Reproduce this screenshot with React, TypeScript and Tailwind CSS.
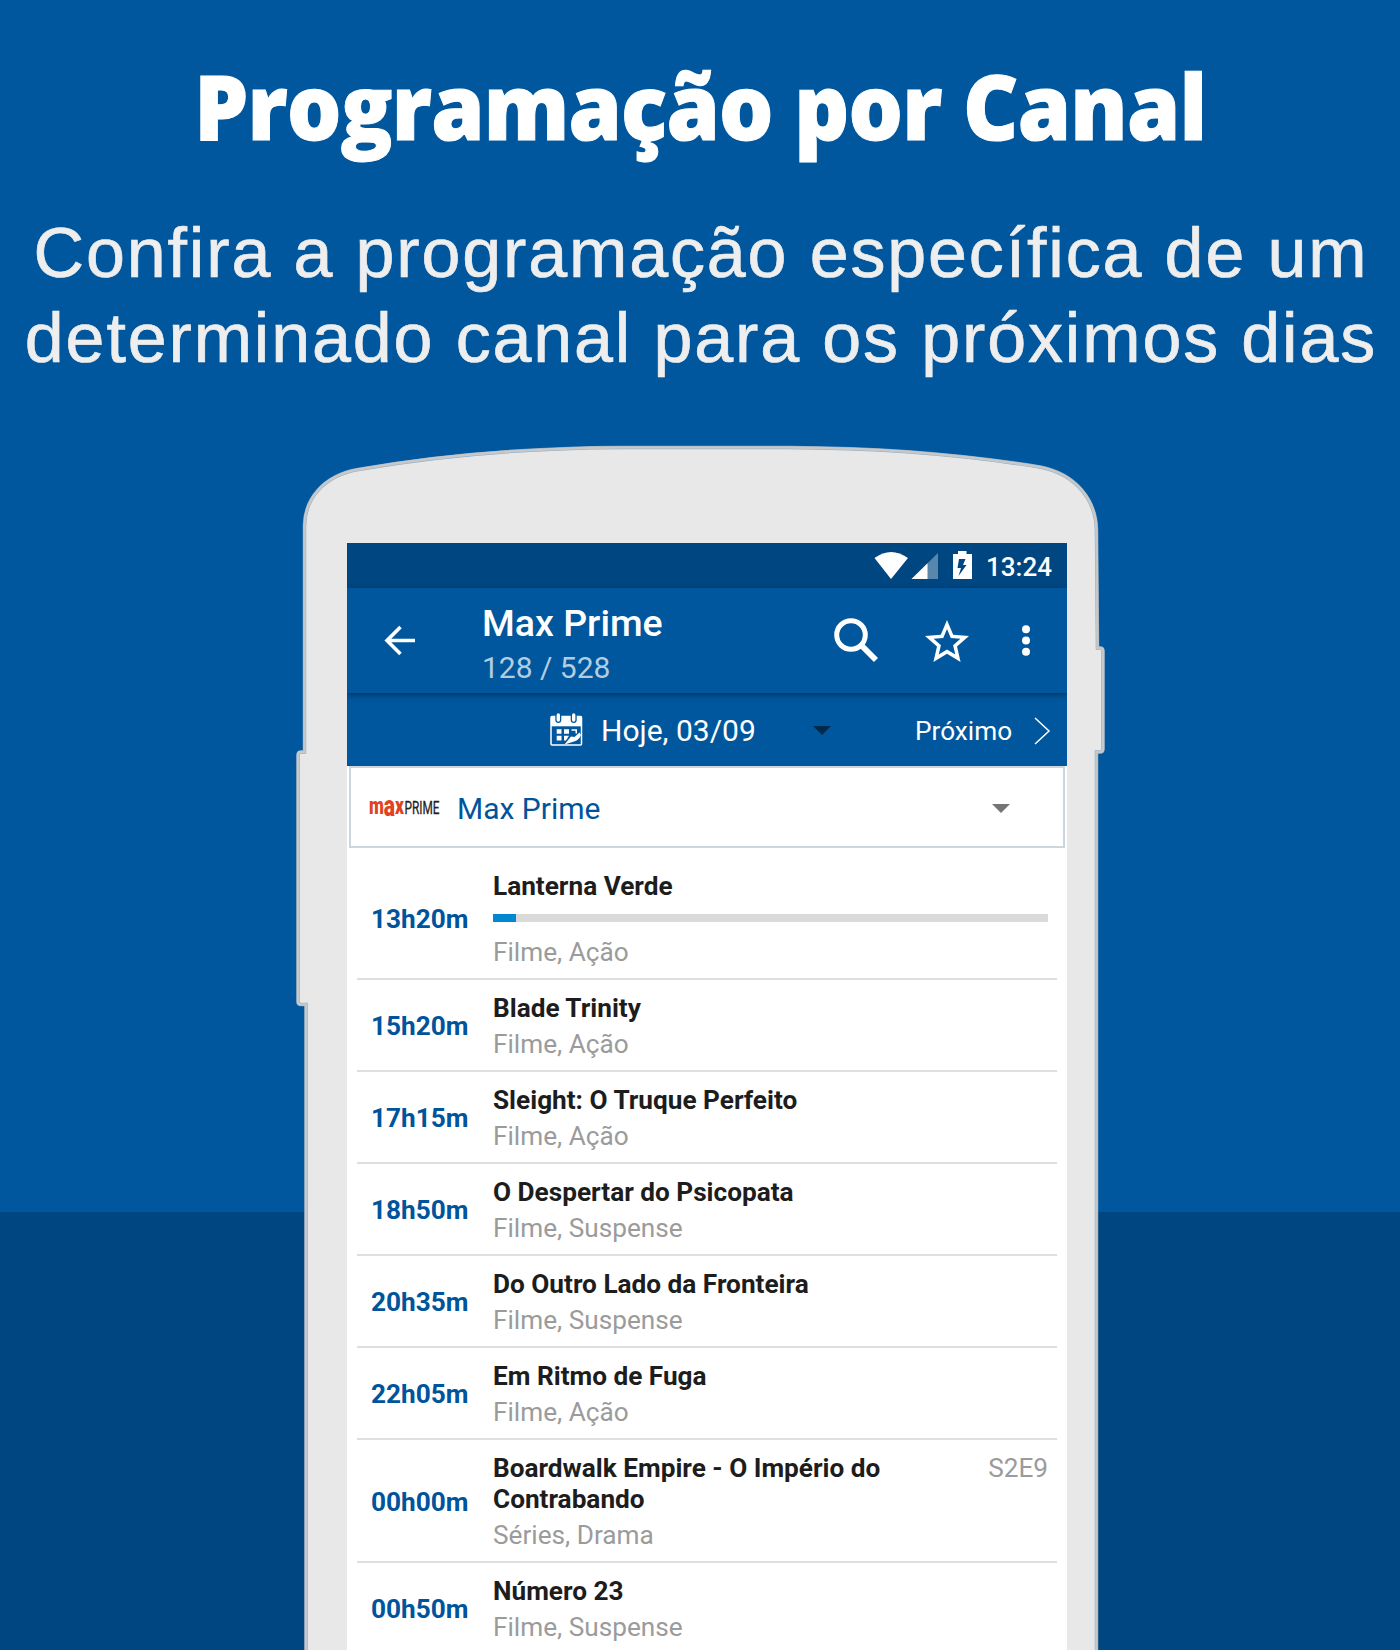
import React from 'react';

interface Programme {
    time: string;
    title: string;
    genre: string;
    episode?: string;
    progress?: number;
}

const programmes: Programme[] = [
    { time: '13h20m', title: 'Lanterna Verde', genre: 'Filme, Ação', progress: 4.1 },
    { time: '15h20m', title: 'Blade Trinity', genre: 'Filme, Ação' },
    { time: '17h15m', title: 'Sleight: O Truque Perfeito', genre: 'Filme, Ação' },
    { time: '18h50m', title: 'O Despertar do Psicopata', genre: 'Filme, Suspense' },
    { time: '20h35m', title: 'Do Outro Lado da Fronteira', genre: 'Filme, Suspense' },
    { time: '22h05m', title: 'Em Ritmo de Fuga', genre: 'Filme, Ação' },
    { time: '00h00m', title: 'Boardwalk Empire - O Império do Contrabando', genre: 'Séries, Drama', episode: 'S2E9' },
    { time: '00h50m', title: 'Número 23', genre: 'Filme, Suspense' },
];

const bodyOutline =
    'M306 1660V1004.500H301Q298 1004.500 298 1001.500V755Q298 752 301 752H304.500V525C305 500 322 476 358 469.500C440 455 530 448 620 447.500H790C880 448 960 454 1040 467C1076 474 1096 500 1096.500 530L1097.500 648H1100Q1103 648 1103 651V749Q1103 752 1100 752H1096.500V1660Z';

// outline of the device, drawn behind the screen
const PhoneBody: React.FC = () => (
    <svg className="absolute left-0 top-0" width="810" height="1205" viewBox="295 445 810 1205">
        <path d={bodyOutline} fill="#e8e8e8" stroke="#8fabc2" strokeWidth="3.500" />
        <path d={bodyOutline} fill="none" stroke="#c6c8c9" strokeWidth="2.600" />
    </svg>
);

const StatusBar: React.FC = () => (
    <div className="flex h-[45px] items-center justify-end bg-[#004680] pr-[15px] pt-px text-white">
        <svg width="100" height="30" viewBox="0 0 100 30" fill="#fff">
            <path d="M0.500 7Q17 -5 34 7L17 28Z" />
            <path d="M37.500 28H64V2Z" opacity=".35" />
            <path d="M37.500 28H53.500V12.300Z" />
            <path
                fillRule="evenodd"
                d="M79 3H84V0H92.500V3H98V28H79ZM85 8L83.500 17H87L84.500 25L92.500 14H89L91.500 8Z"
            />
        </svg>
        <span className="ml-[12px] mt-[2px] text-[26px] font-medium leading-none">13:24</span>
    </div>
);

const Toolbar: React.FC = () => (
    <div className="relative flex h-[105px] bg-[#00579d] text-white shadow-[0_2px_6px_rgba(0,0,0,0.4)]">
        <svg className="ml-[37px] mt-[37px]" width="32" height="32" viewBox="0 0 32 32" fill="none" stroke="#fff" strokeWidth="3.600">
            <path d="M31 15.500H4M16.500 2L3 15.500L16.500 29" />
        </svg>
        <div className="ml-[66px] mt-[12px] flex-1">
            <h2 className="text-[37.5px] font-medium leading-[46px]">Max Prime</h2>
            <p className="mt-px text-[30px] leading-[42px] text-[#b2cde1]">128 / 528</p>
        </div>
        <svg className="mt-[30px]" width="44" height="46" viewBox="0 0 44 46" fill="none" stroke="#fff">
            <circle cx="17" cy="17" r="14.300" strokeWidth="5" />
            <path d="M27.500 27.500L42 42" strokeWidth="5.800" />
        </svg>
        <svg className="ml-[47px] mt-[32px]" width="44" height="42" viewBox="2 2 20 19" fill="#fff">
            <path d="M22 9.240l-7.190-.62L12 2 9.190 8.630 2 9.240l5.460 4.730L5.820 21 12 17.270 18.180 21l-1.630-7.030L22 9.240zM12 15.400l-3.760 2.270 1-4.280-3.320-2.880 4.380-.38L12 6.100l1.710 4.040 4.380.38-3.320 2.880 1 4.280L12 15.400z" />
        </svg>
        <svg className="ml-[52px] mr-[36px] mt-[36px]" width="10" height="34" viewBox="0 0 10 34" fill="#fff">
            <circle cx="5" cy="5.300" r="4" />
            <circle cx="5" cy="16.500" r="4" />
            <circle cx="5" cy="27.700" r="4" />
        </svg>
    </div>
);

const DateBar: React.FC = () => (
    <div className="flex h-[73px] items-center bg-[#00579d] pt-[2px] text-white">
        <svg className="ml-[203px]" width="33" height="35" viewBox="0 0 33 35" fill="none">
            <rect x="1" y="3.500" width="30.500" height="28.500" rx="1" stroke="#fff" strokeWidth="1.500" />
            <path d="M1 3H32V13.300H1Z" fill="#fff" />
            <path d="M8.300 2V7M23.700 2V7" stroke="#00579d" strokeWidth="6" strokeLinecap="round" />
            <path d="M8.300 2V7M23.700 2V7" stroke="#fff" strokeWidth="3.400" strokeLinecap="round" />
            <path d="M6.700 16.300H11.500V20.700H6.700ZM14 16.300H19V20.700H14ZM21.500 16.300H27V20.500H25.500V17.800H21.500ZM6.700 22.700H11.500V27.500H6.700ZM14 22.700H19L16 27.500H14Z" fill="#fff" />
            <path d="M14.500 31.500L21 23.500L24.500 24L29.500 19.500L31 22Q29 27.500 22.500 29Z" fill="#fff" />
        </svg>
        <span className="ml-[18px] w-[212px] text-[30px] leading-none">Hoje, 03/09</span>
        <svg width="18" height="9" viewBox="0 0 18 9"><path d="M0 0H18L9 9Z" fill="#01294a" /></svg>
        <span className="ml-[84px] mt-px text-[26.2px] leading-none">Próximo</span>
        <svg className="ml-[22px]" width="17" height="28" viewBox="0 0 17 28" fill="none" stroke="#fff" strokeWidth="1.500">
            <path d="M1 1L15 14L1 27" />
        </svg>
    </div>
);

const ChannelSelect: React.FC = () => (
    <div className="mx-[2px] flex h-[82px] items-center border-2 border-[#cdd7db] bg-white pt-[2px]">
        <svg className="ml-[18px] overflow-visible" width="76" height="44" viewBox="0 0 76 44">
            <text x="0" y="28" fontSize="24.500" fontWeight="900" fill="#e1421f" textLength="35" lengthAdjust="spacingAndGlyphs">
                m<tspan fontSize="30" dy="1.500">a</tspan><tspan dy="-1.500">x</tspan>
            </text>
            <text x="35.500" y="28" fontSize="18" fill="#222" stroke="#222" strokeWidth="0.300" textLength="35" lengthAdjust="spacingAndGlyphs">PRIME</text>
        </svg>
        <span className="ml-[12px] mt-px flex-1 text-[30px] leading-none text-[#00549b]">Max Prime</span>
        <svg className="mr-[53px]" width="18" height="9" viewBox="0 0 18 9"><path d="M0 0H18L9 9Z" fill="#757575" /></svg>
    </div>
);

const ProgrammeRow: React.FC<{ item: Programme }> = ({ item }) => (
    <li className="mx-[10px] flex items-center border-b-2 border-[#dfdfdf]">
        <span className="w-[136px] pl-[14px] pt-[3px] text-[26.2px] font-bold leading-none text-[#00549b]">{item.time}</span>
        <div className="flex-1 pb-[10px] pr-[9px] pt-[13px]">
            <div className="flex items-start justify-between">
                <h3 className="w-[410px] text-[26.2px] font-bold leading-[31px] text-[#1d1d1d]">{item.title}</h3>
                {item.episode && <span className="text-[26.2px] leading-[31px] text-[#9b9b9b]">{item.episode}</span>}
            </div>
            {item.progress !== undefined && (
                <div className="mb-[14px] mt-[12px] h-[8px] bg-[#dadada]">
                    <div className="h-full bg-[#0288d1]" style={{ width: `${item.progress}%` }} />
                </div>
            )}
            <p className="mt-[4px] text-[26.2px] leading-[32px] text-[#9b9b9b]">{item.genre}</p>
        </div>
    </li>
);

const App: React.FC = () => {
    return (
        <div className="h-[1650px] w-[1400px] overflow-hidden bg-[linear-gradient(#00579d_1212px,#004680_1212px)]">
            <header className="flex h-[445px] flex-col items-center whitespace-nowrap text-center">
                <h1 className="mt-[43px] scale-x-[0.94] font-['Open_Sans',sans-serif] text-[91px] font-extrabold leading-[124px] tracking-[-0.8px] text-white [-webkit-text-stroke:1px_#fff]">
                    Programação por Canal
                </h1>
                <p className="mt-[44px] pl-[2px] font-['Liberation_Sans',sans-serif] text-[70px] leading-[85px] tracking-[1.85px] text-[#eee] [-webkit-text-stroke:0.7px_#eee]">
                    Confira a programação específica de um
                    <br />
                    determinado canal para os próximos dias
                </p>
            </header>
            <main className="relative ml-[295px] w-[810px] pl-[52px] pt-[98px] font-[Roboto,sans-serif]">
                <PhoneBody />
                <div className="relative h-[1107px] w-[720px] overflow-hidden bg-white">
                    <StatusBar />
                    <Toolbar />
                    <DateBar />
                    <ChannelSelect />
                    <ul className="pt-[10px]">
                        {programmes.map((item) => (
                            <ProgrammeRow key={item.time} item={item} />
                        ))}
                    </ul>
                </div>
            </main>
        </div>
    );
};

export default App;
